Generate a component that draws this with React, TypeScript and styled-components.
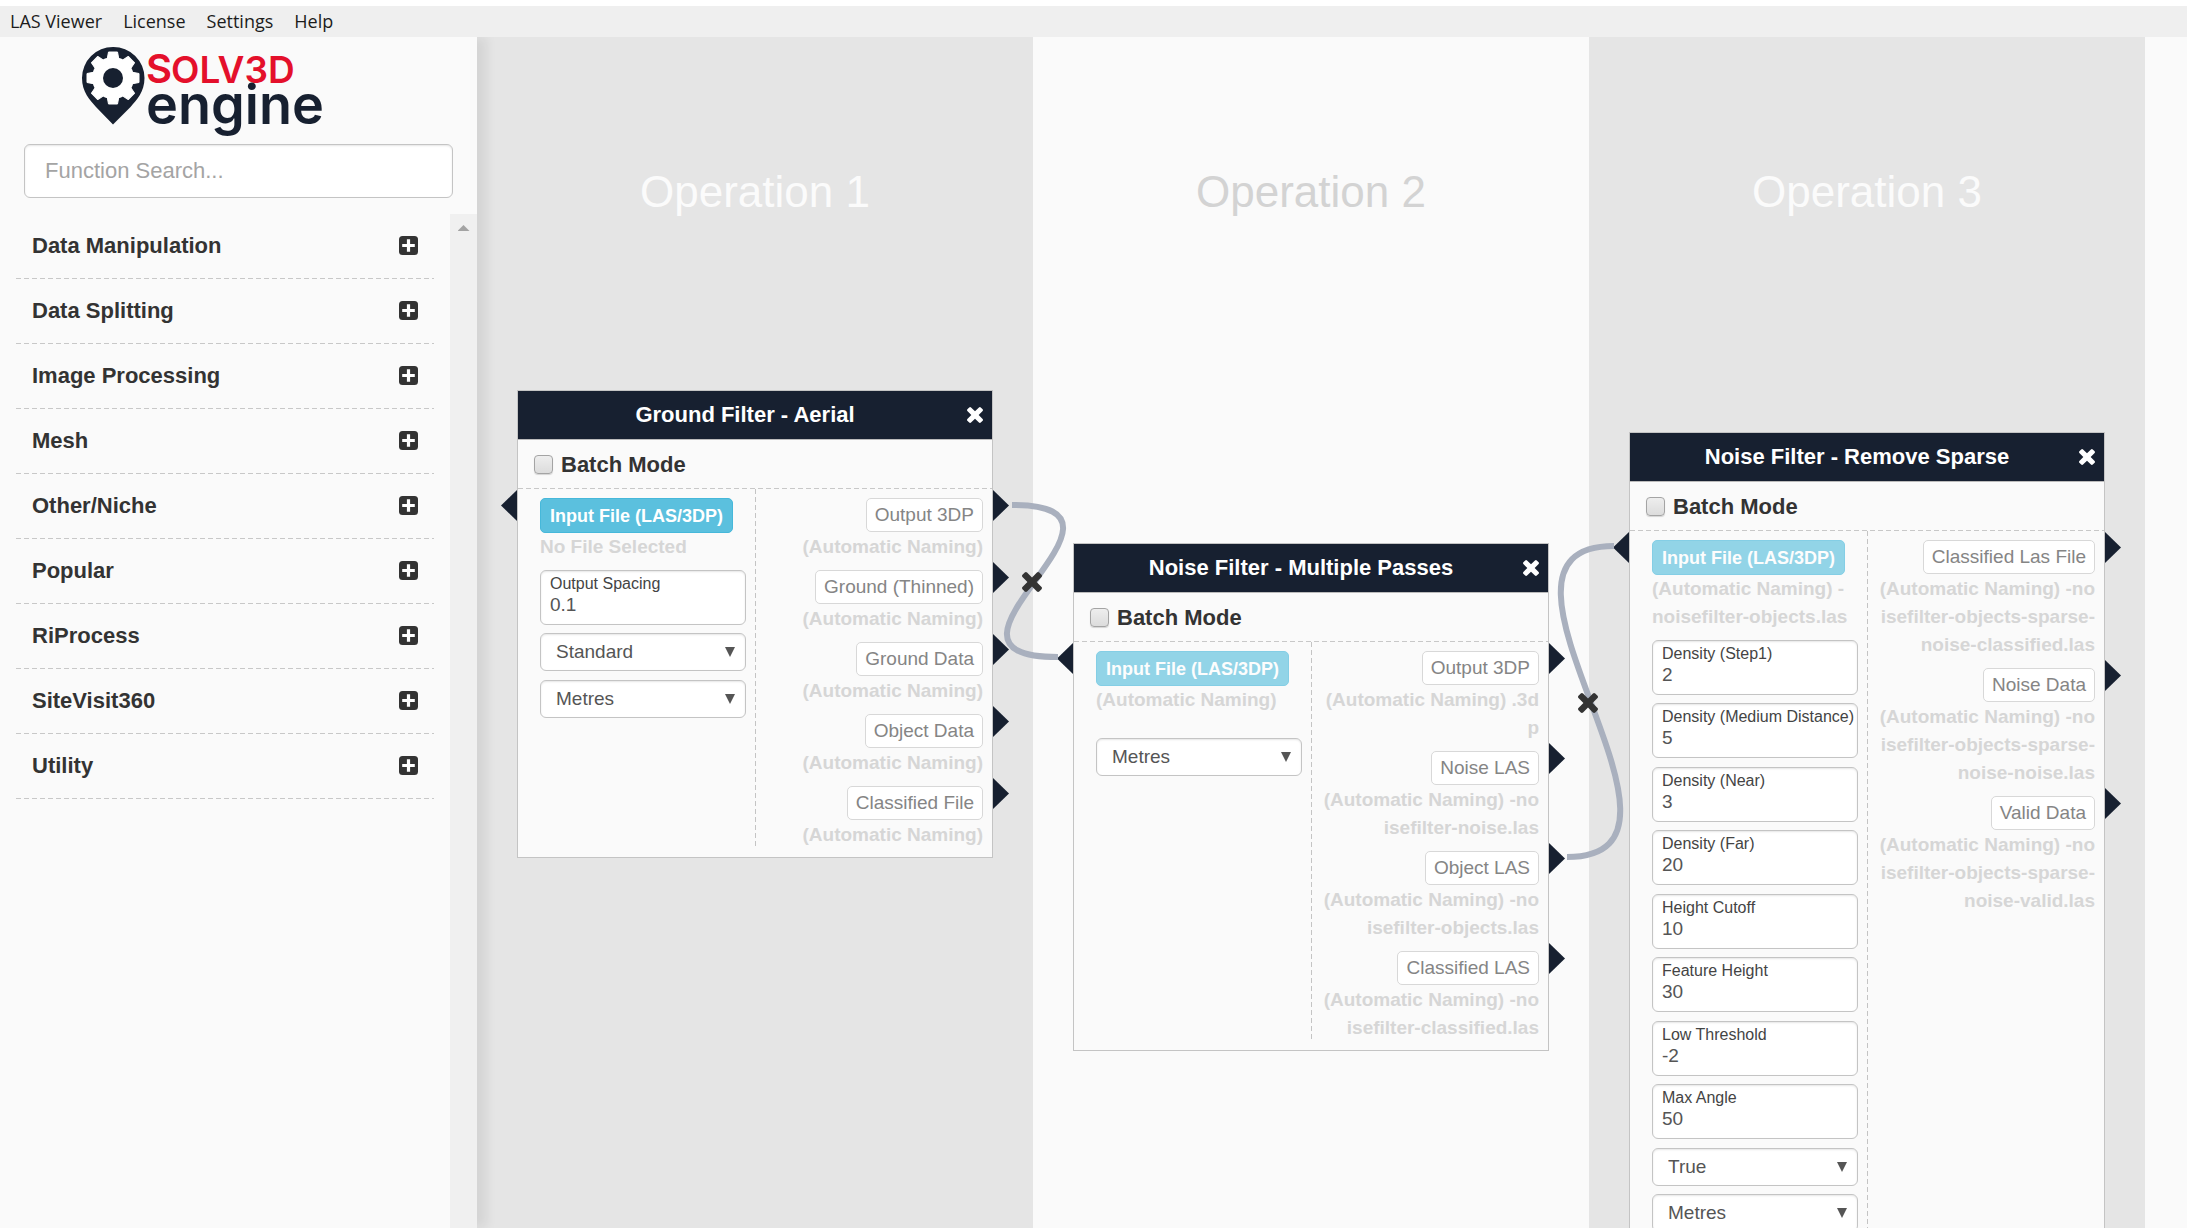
import React, { useId } from "react";
import styled, { createGlobalStyle } from "styled-components";

const sans = `"Liberation Sans", Arial, sans-serif`;
const navy = "#172030";

const GlobalStyle = createGlobalStyle`
  *, *::before, *::after { box-sizing: border-box; }
  body { margin: 0; background: #fafafa; color: #333; font-family: ${sans}; overflow: hidden; }
  button, input, select { font-family: inherit; }
`;

const dashesX = `repeating-linear-gradient(to right, #c8c8c8 0 5px, transparent 5px 8px)`;
const dashesY = `repeating-linear-gradient(to bottom, #c4c4c4 0 5px, transparent 5px 8px)`;

const Shell = styled.div`
  display: flex;
  flex-direction: column;
  height: 100vh;
`;

const MenuBar = styled.nav`
  display: flex;
  align-items: center;
  gap: 21px;
  height: 37px;
  padding: 0 10px 2px;
  border-top: 6px solid #fff;
  background: #efefef;
`;

const MenuItem = styled.button`
  padding: 0;
  border: 0;
  background: none;
  color: #1c1c1c;
  font-family: "Open Sans", "Noto Sans", sans-serif;
  font-size: 18px;
  line-height: 24px;
`;

const Main = styled.div`
  display: flex;
  flex: 1;
  min-height: 0;
  overflow: hidden;
`;

const Sidebar = styled.aside`
  position: relative;
  z-index: 2;
  display: flex;
  flex-direction: column;
  flex: 0 0 477px;
  background: #fafafa;
  box-shadow: 10px 0 10px rgba(0, 0, 0, 0.07);
`;

const Logo = styled.svg`
  display: block;
  width: 250px;
  height: 107px;
  margin-left: 80px;
`;

const SearchInput = styled.input`
  height: 54px;
  margin: 0 24px 16px;
  padding: 0 20px;
  border: 1px solid #c4c4c4;
  border-radius: 6px;
  background: #fff;
  box-shadow: inset 0 1px 2px rgba(0, 0, 0, 0.1);
  font-size: 22px;
  color: #555;
  &::placeholder { color: #a4a4a4; opacity: 1; }
`;

const ListArea = styled.div`
  display: flex;
  flex: 1;
  min-height: 0;
`;

const CategoryList = styled.ul`
  flex: 1;
  margin: 0;
  padding: 0 16px;
  list-style: none;
`;

const CategoryItem = styled.li`
  background: ${dashesX} left bottom / 100% 1px no-repeat;
`;

const CategoryButton = styled.button`
  display: flex;
  align-items: center;
  justify-content: space-between;
  width: 100%;
  height: 65px;
  padding: 0 16px 2px;
  border: 0;
  background: none;
  color: #333;
  font-size: 22px;
  font-weight: 700;
`;

const ScrollTrack = styled.div`
  display: flex;
  justify-content: center;
  flex: 0 0 27px;
  padding-top: 11px;
  background: #f0f0f0;
`;

const ScrollArrow = styled.span`
  width: 12px;
  height: 6px;
  background: #a3a3a3;
  clip-path: polygon(50% 0, 100% 100%, 0 100%);
`;

const Canvas = styled.main`
  position: relative;
  display: flex;
  flex: 1;
  min-width: 0;
  overflow: hidden;
`;

const Lane = styled.section<{ $shaded: boolean }>`
  flex: 0 0 556px;
  padding-top: 130px;
  background: ${(p) => (p.$shaded ? "#e5e5e5" : "#fafafa")};
  color: ${(p) => (p.$shaded ? "#fbfbfb" : "#d3d3d3")};
  text-align: center;
`;

const LaneTitle = styled.h2`
  margin: 0;
  font-size: 44px;
  font-weight: 400;
  line-height: 50px;
`;

const Wires = styled.svg`
  position: absolute;
  inset: 0;
  width: 100%;
  height: 100%;
  pointer-events: none;
`;

const NodeCard = styled.article<{ $x: number; $y: number }>`
  position: absolute;
  left: ${(p) => p.$x}px;
  top: ${(p) => p.$y}px;
  width: 476px;
  border: 1px solid #c4c4c4;
  background: #fafafa;
`;

const NodeHeader = styled.header`
  display: grid;
  align-items: center;
  height: 49px;
  border-bottom: 1px solid #bbb;
  background: ${navy};
  color: #fff;
`;

const NodeTitle = styled.h3`
  grid-area: 1 / 1;
  margin: 0;
  padding-right: 20px;
  font-size: 22px;
  font-weight: 700;
  line-height: 26px;
  text-align: center;
`;

const CloseButton = styled.button`
  grid-area: 1 / 1;
  justify-self: end;
  display: flex;
  padding: 0;
  margin-right: 9px;
  border: 0;
  background: none;
  color: #fff;
`;

const BatchRow = styled.label`
  display: flex;
  align-items: center;
  gap: 8px;
  height: 49px;
  padding: 0 16px;
  background: ${dashesX} left bottom / 100% 1px no-repeat;
  font-size: 22px;
  font-weight: 700;
`;

const Checkbox = styled.input`
  appearance: none;
  width: 19px;
  height: 19px;
  margin: 0;
  border: 1px solid #a4a4a4;
  border-radius: 4px;
  background: linear-gradient(#eee, #dcdcdc);
  box-shadow: 0 1px 1px rgba(0, 0, 0, 0.15);
`;

const NodeBody = styled.div`
  display: grid;
  grid-template-columns: 237px 1fr;
  padding-bottom: 8px;
`;

const Inputs = styled.div`
  position: relative;
  display: flex;
  flex-direction: column;
  align-items: flex-start;
  padding: 9px 9px 0 22px;
`;

const Outputs = styled.div`
  display: flex;
  flex-direction: column;
  gap: 9px;
  padding: 9px 9px 0 0;
  background: ${dashesY} left top / 1px 100% no-repeat;
`;

const Output = styled.div`
  position: relative;
  display: flex;
  flex-direction: column;
  align-items: flex-end;
`;

const Port = styled.span<{ $side: "in" | "out" }>`
  position: absolute;
  width: 16px;
  height: 31px;
  background: ${navy};
  ${(p) =>
    p.$side === "in"
      ? `top: 1px; left: -17px; clip-path: polygon(0 50%, 100% 0, 100% 100%);`
      : `top: -8px; right: -26px; clip-path: polygon(0 0, 100% 50%, 0 100%);`}
`;

const InputFileButton = styled.button<{ $linked: boolean }>`
  height: 35px;
  padding: 0 9px;
  border: 1px solid #46b8da;
  border-radius: 5px;
  background: #5bc0de;
  color: #fff;
  font-size: 18px;
  font-weight: 700;
  line-height: 24px;
  opacity: ${(p) => (p.$linked ? 0.65 : 1)};
`;

const OutputButton = styled.button`
  height: 34px;
  padding: 0 8px;
  border: 1px solid #d8d8d8;
  border-radius: 5px;
  background: #fff;
  color: #858585;
  font-size: 19px;
  line-height: 24px;
`;

const FileName = styled.p<{ $align: "left" | "right"; $gap?: number }>`
  margin: ${(p) => (p.$align === "right" ? 1 : 0)}px 0 ${(p) => p.$gap ?? 0}px;
  color: #d6d6d6;
  font-size: 19px;
  font-weight: 700;
  line-height: 28px;
  text-align: ${(p) => p.$align};
  white-space: pre;
`;

const Control = styled.div`
  position: relative;
  width: 206px;
  margin-bottom: 8px;
  border: 1px solid #c4c4c4;
  border-radius: 6px;
  background: #fff;
  box-shadow: inset 0 1px 2px rgba(0, 0, 0, 0.1);
  &:nth-of-type(even) { margin-bottom: 9px; }
`;

const Field = styled(Control)`
  display: flex;
  flex-direction: column;
  height: 55px;
  padding: 4px 0 0 9px;
`;

const FieldLabel = styled.label`
  color: #444;
  font-size: 16px;
  line-height: 18px;
  white-space: nowrap;
`;

const FieldInput = styled.input`
  width: 100%;
  height: 24px;
  padding: 0;
  border: 0;
  background: none;
  color: #555;
  font-size: 19px;
`;

const SelectBox = styled(Control)`
  height: 38px;
  &::after {
    content: "";
    position: absolute;
    top: 13px;
    right: 10px;
    width: 10px;
    height: 10px;
    background: #555;
    clip-path: polygon(0 0, 100% 0, 50% 100%);
    pointer-events: none;
  }
`;

const Select = styled.select`
  appearance: none;
  width: 100%;
  height: 35px;
  padding: 0 28px 0 15px;
  border: 0;
  background: none;
  color: #555;
  font-size: 19px;
`;

const TIMES =
  "M1298 1322q0 40-28 68l-136 136q-28 28-68 28t-68-28l-294-294-294 294q-28 28-68 28t-68-28l-136-136q-28-28-28-68t28-68l294-294-294-294q-28-28-28-68t28-68l136-136q28-28 68-28t68 28l294 294 294-294q28-28 68-28t68 28l136 136q28 28 28 68t-28 68l-294 294 294 294q28 28 28 68z";

function Times({ size }: { size: number }) {
  return (
    <svg width={size} height={size} viewBox="110 366 1188 1188" aria-hidden="true">
      <path d={TIMES} fill="currentColor" />
    </svg>
  );
}

function PlusSquare() {
  return (
    <svg width="19" height="19" viewBox="0 0 19 19" aria-hidden="true">
      <rect width="19" height="19" rx="3.5" fill="#333" />
      <path d="M9.5 3.2v12.6M3.2 9.5h12.6" stroke="#fff" strokeWidth="3.2" />
    </svg>
  );
}

function BrandLogo() {
  const teeth = [0, 45, 90, 135, 180, 225, 270, 315];
  return (
    <Logo viewBox="80 37 250 107" role="img" aria-label="SOLV3D engine">
      <path d="M113 47a31 31 0 0 1 31.500 31c0 14-8 22-14 29L113 124.500 96 107c-6-7-14-15-14-29a31 31 0 0 1 31-31z" fill={navy} />
      <circle cx="113" cy="78" r="21" fill="#fff" />
      {teeth.map((a) => (
        <path key={a} d="M107 60l1.500-8h9l1.500 8z" fill="#fff" stroke="#fff" strokeWidth="1" strokeLinejoin="round" transform={`rotate(${a} 113 78)`} />
      ))}
      <circle cx="113" cy="78" r="10" fill={navy} />
      <g fontFamily="Inter, sans-serif" fontWeight="600">
        <text x="146" y="83" fontSize="40" fill="#e4102b">S</text>
        <text x="171" y="83" fontSize="37" fill="#e4102b">OLV3D</text>
        <text x="146" y="124" fontSize="54" fill={navy}>engine</text>
      </g>
    </Logo>
  );
}

type ControlSpec = { label: string; value: string } | { options: string[] };

interface NodeSpec {
  title: string;
  x: number;
  y: number;
  linked: boolean;
  file: string;
  fileGap: number;
  controls: ControlSpec[];
  outputs: { name: string; file: string }[];
}

const auto = "(Automatic Naming)";
const field = (label: string, value: string) => ({ label, value });

const nodes: NodeSpec[] = [
  {
    title: "Ground Filter - Aerial",
    x: 40,
    y: 353,
    linked: false,
    file: "No File Selected",
    fileGap: 9,
    controls: [field("Output Spacing", "0.1"), { options: ["Standard"] }, { options: ["Metres"] }],
    outputs: ["Output 3DP", "Ground (Thinned)", "Ground Data", "Object Data", "Classified File"].map((name) => ({ name, file: auto })),
  },
  {
    title: "Noise Filter - Multiple Passes",
    x: 596,
    y: 506,
    linked: true,
    file: auto,
    fileGap: 24,
    controls: [{ options: ["Metres"] }],
    outputs: [
      { name: "Output 3DP", file: `${auto} .3d\np` },
      { name: "Noise LAS", file: `${auto} -no\nisefilter-noise.las` },
      { name: "Object LAS", file: `${auto} -no\nisefilter-objects.las` },
      { name: "Classified LAS", file: `${auto} -no\nisefilter-classified.las` },
    ],
  },
  {
    title: "Noise Filter - Remove Sparse",
    x: 1152,
    y: 395,
    linked: true,
    file: `${auto} -\nnoisefilter-objects.las`,
    fileGap: 9,
    controls: [
      field("Density (Step1)", "2"),
      field("Density (Medium Distance)", "5"),
      field("Density (Near)", "3"),
      field("Density (Far)", "20"),
      field("Height Cutoff", "10"),
      field("Feature Height", "30"),
      field("Low Threshold", "-2"),
      field("Max Angle", "50"),
      { options: ["True", "False"] },
      { options: ["Metres"] },
    ],
    outputs: [
      { name: "Classified Las File", file: `${auto} -no\nisefilter-objects-sparse-\nnoise-classified.las` },
      { name: "Noise Data", file: `${auto} -no\nisefilter-objects-sparse-\nnoise-noise.las` },
      { name: "Valid Data", file: `${auto} -no\nisefilter-objects-sparse-\nnoise-valid.las` },
    ],
  },
];

const categories = [
  "Data Manipulation",
  "Data Splitting",
  "Image Processing",
  "Mesh",
  "Other/Niche",
  "Popular",
  "RiProcess",
  "SiteVisit360",
  "Utility",
];

function NodeControl({ spec }: { spec: ControlSpec }) {
  const id = useId();
  if ("options" in spec) {
    return (
      <SelectBox>
        <Select aria-label={spec.options[0]}>
          {spec.options.map((o) => (
            <option key={o}>{o}</option>
          ))}
        </Select>
      </SelectBox>
    );
  }
  return (
    <Field>
      <FieldLabel htmlFor={id}>{spec.label}</FieldLabel>
      <FieldInput id={id} defaultValue={spec.value} />
    </Field>
  );
}

function FilterNode({ node }: { node: NodeSpec }) {
  return (
    <NodeCard $x={node.x} $y={node.y}>
      <NodeHeader>
        <NodeTitle>{node.title}</NodeTitle>
        <CloseButton aria-label="Close">
          <Times size={16} />
        </CloseButton>
      </NodeHeader>
      <BatchRow>
        <Checkbox type="checkbox" />
        Batch Mode
      </BatchRow>
      <NodeBody>
        <Inputs>
          <Port $side="in" />
          <InputFileButton $linked={node.linked}>Input File (LAS/3DP)</InputFileButton>
          <FileName $align="left" $gap={node.fileGap}>{node.file}</FileName>
          {node.controls.map((c, i) => (
            <NodeControl key={i} spec={c} />
          ))}
        </Inputs>
        <Outputs>
          {node.outputs.map((o) => (
            <Output key={o.name}>
              <Port $side="out" />
              <OutputButton>{o.name}</OutputButton>
              <FileName $align="right">{o.file}</FileName>
            </Output>
          ))}
        </Outputs>
      </NodeBody>
    </NodeCard>
  );
}

export default function App() {
  return (
    <Shell>
      <GlobalStyle />
      <MenuBar>
        {["LAS Viewer", "License", "Settings", "Help"].map((m) => (
          <MenuItem key={m}>{m}</MenuItem>
        ))}
      </MenuBar>
      <Main>
        <Sidebar>
          <BrandLogo />
          <SearchInput type="text" placeholder="Function Search..." aria-label="Function Search" />
          <ListArea>
            <CategoryList>
              {categories.map((c) => (
                <CategoryItem key={c}>
                  <CategoryButton>
                    {c}
                    <PlusSquare />
                  </CategoryButton>
                </CategoryItem>
              ))}
            </CategoryList>
            <ScrollTrack>
              <ScrollArrow />
            </ScrollTrack>
          </ListArea>
        </Sidebar>
        <Canvas>
          {[1, 2, 3].map((n) => (
            <Lane key={n} $shaded={n % 2 === 1}>
              <LaneTitle>Operation {n}</LaneTitle>
            </Lane>
          ))}
          {nodes.map((n) => (
            <FilterNode key={n.title} node={n} />
          ))}
          <Wires aria-hidden="true">
            <g fill="none" stroke="#a9b0be" strokeWidth="6">
              <path d="M535 468C691 468 425 620 581 620" />
              <path d="M1090 820C1253 820 974 509 1137 509" />
            </g>
            <g color="#333">
              <svg x="545" y="535" width="20" height="20" viewBox="110 366 1188 1188">
                <path d={TIMES} fill="currentColor" />
              </svg>
              <svg x="1101" y="656" width="20" height="20" viewBox="110 366 1188 1188">
                <path d={TIMES} fill="currentColor" />
              </svg>
            </g>
          </Wires>
        </Canvas>
      </Main>
    </Shell>
  );
}
